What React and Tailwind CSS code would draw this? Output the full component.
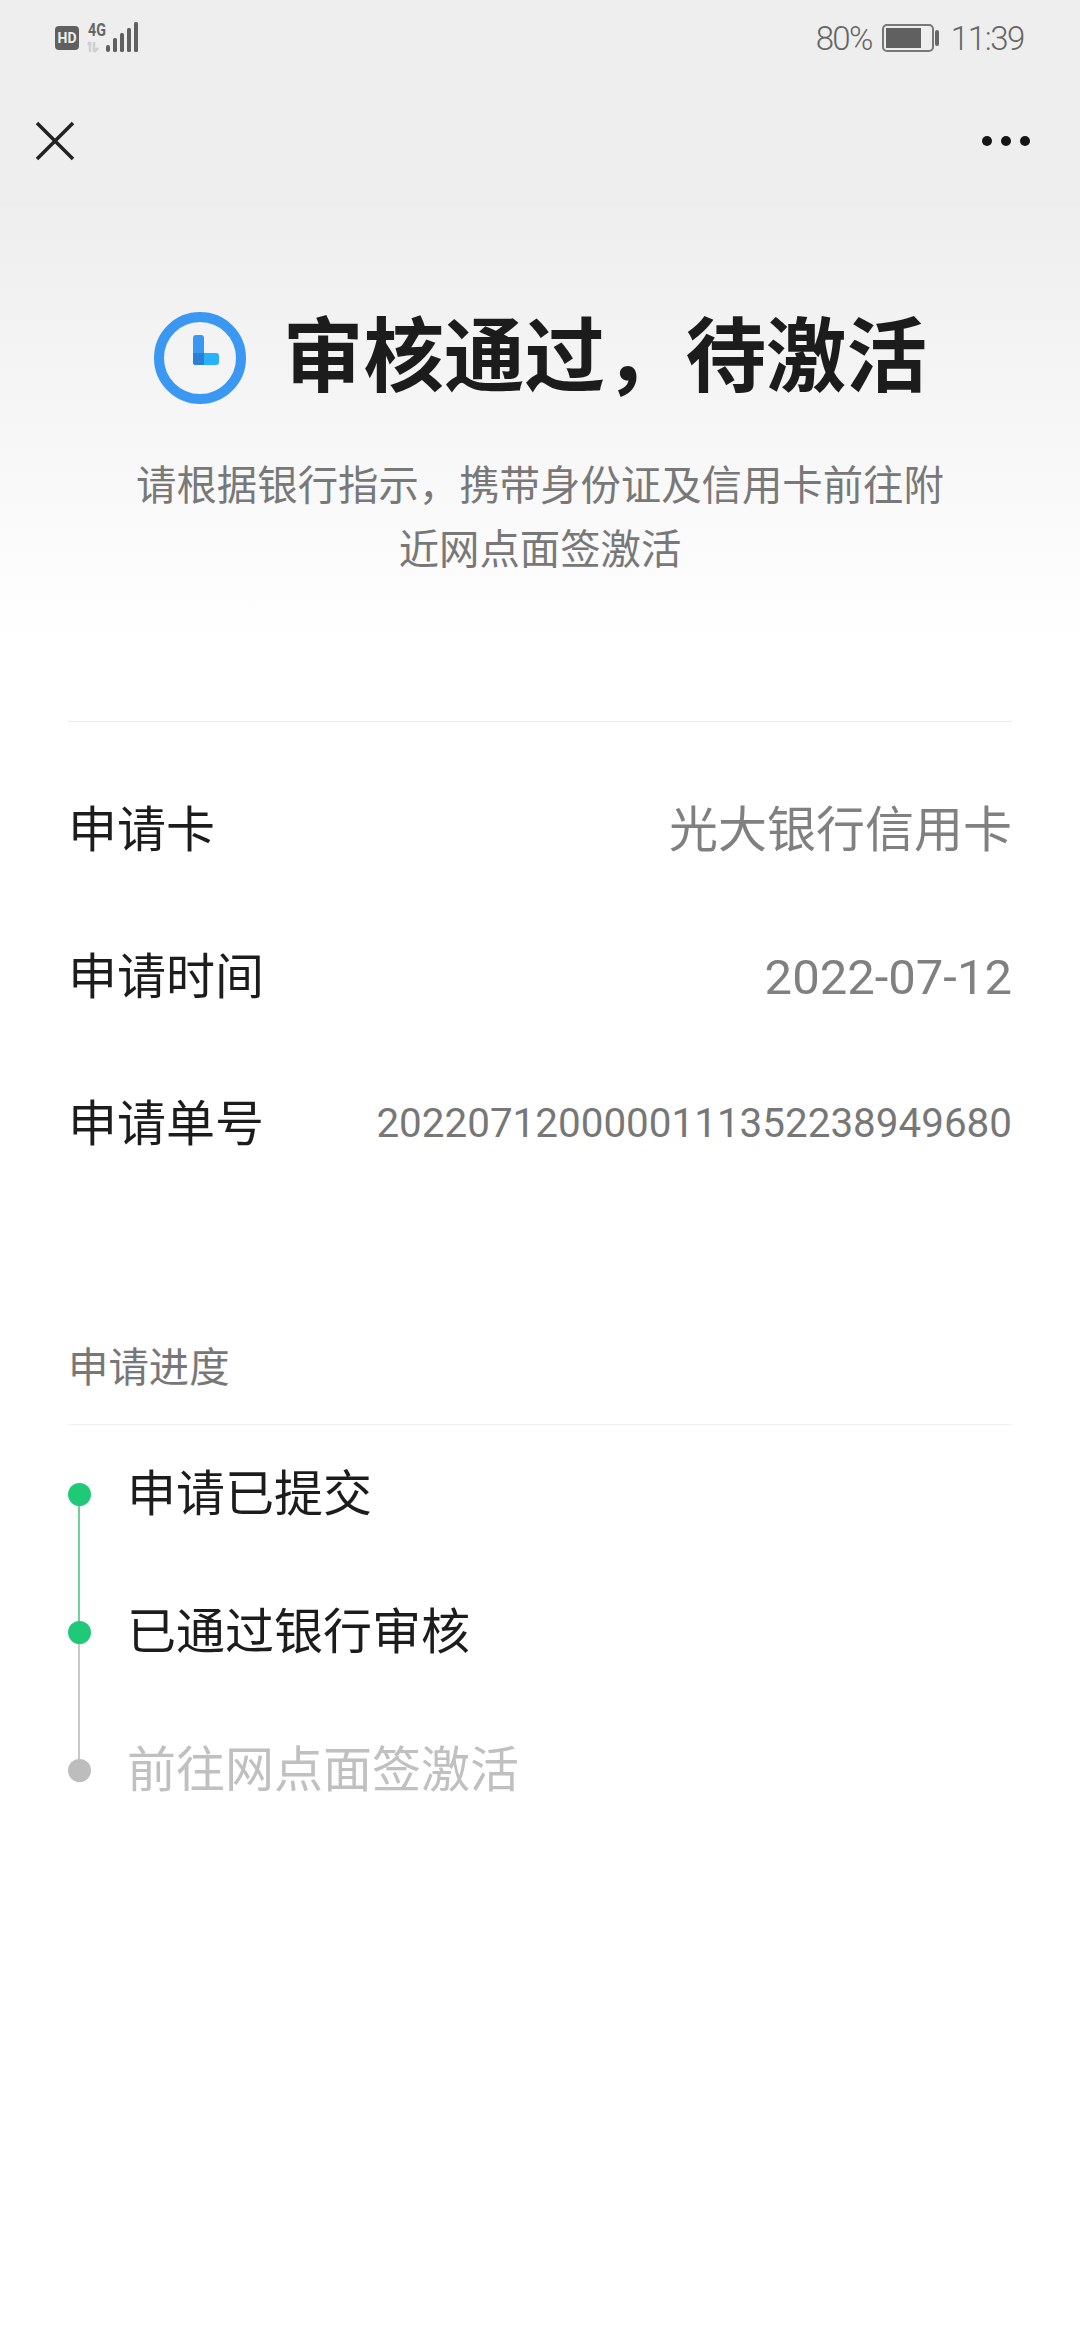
const sans = "font-['Roboto','Noto_Sans_CJK_SC',sans-serif]";

function Clock() {
  return (
    <svg width="92" height="92" viewBox="0 0 92 92" className="shrink-0">
      <circle cx="46" cy="46" r="41" fill="none" stroke="#3a98f3" strokeWidth="10" />
      <rect x="39" y="23" width="11" height="30" rx="3" fill="#3a98f3" />
      <rect x="39" y="41" width="26" height="12" rx="3" fill="#2bb0fb" />
      <path d="M39 41h11v12h-8a3 3 0 0 1-3-3z" fill="#2a7fd8" />
    </svg>
  );
}

function StatusBar() {
  return (
    <div className="flex h-[76px] items-center justify-between pl-[55px] pr-[56px] text-[#666666]">
      <svg width="88" height="44" viewBox="0 -4 88 44">
        <rect x="0" y="6" width="24" height="24" rx="4" fill="#606060" />
        <text x="12" y="23" textAnchor="middle" fontSize="14" fontWeight="700" fill="#efefef" fontFamily="Roboto">HD</text>
        <text transform="translate(33 16) scale(.75 1)" fontSize="19" fontWeight="700" fill="#666" fontFamily="Roboto">4G</text>
        <path d="M35 22v10M39 22v10M39 32l4-4M35 22l-2 3" stroke="#cfcfcf" strokeWidth="2.5" fill="none" />
        <rect x="51" y="25" width="4" height="7" rx="2" fill="#606060" />
        <rect x="58" y="18" width="4" height="14" rx="1.5" fill="#606060" />
        <rect x="65" y="13" width="4" height="19" rx="1.5" fill="#606060" />
        <rect x="72" y="8" width="4" height="24" rx="1.5" fill="#606060" />
        <rect x="79" y="2" width="4" height="30" rx="1.5" fill="#606060" />
      </svg>
      <div className="flex items-center">
        <span className="text-[33px] font-light leading-none tracking-[-1.6px]">80%</span>
        <svg width="58" height="30" viewBox="0 0 58 30" className="ml-[10px]">
          <rect x="1" y="2" width="50" height="26" rx="4" fill="none" stroke="#777" strokeWidth="2" />
          <rect x="4" y="5" width="35" height="20" fill="#606060" />
          <rect x="53" y="7" width="4" height="16" rx="2" fill="#666" />
        </svg>
        <span className="ml-[11px] text-[33px] font-light leading-none tracking-[-1.4px]">11:39</span>
      </div>
    </div>
  );
}

function NavBar() {
  return (
    <div className="flex h-[129px] items-center justify-between border-b border-[#e9e9e9] pl-[35px] pr-[50px]">
      <svg width="40" height="40" viewBox="0 0 40 40" className="mt-[2px]">
        <path d="M2 2 38 38M38 2 2 38" stroke="#222" strokeWidth="3.5" />
      </svg>
      <div className="mt-[2px] flex gap-[9px]">
        <span className="h-[10px] w-[10px] rounded-full bg-[#151515]" />
        <span className="h-[10px] w-[10px] rounded-full bg-[#151515]" />
        <span className="h-[10px] w-[10px] rounded-full bg-[#151515]" />
      </div>
    </div>
  );
}

function InfoRow({ label, value, small }) {
  return (
    <div className="flex h-[147px] items-center justify-between">
      <span className="text-[49px] leading-none text-[#1c1c1c]">{label}</span>
      <span className={small ? "text-[40.4px] leading-none text-[#777777]" : "text-[49px] leading-none text-[#808080]"}>{value}</span>
    </div>
  );
}

function Step({ text, color, textColor, line }) {
  return (
    <div className="relative flex h-[138px] items-center">
      {line && <span className="absolute left-[10px] top-[69px] h-[138px] w-[2px]" style={{ backgroundColor: line }} />}
      <span className="relative h-[23px] w-[23px] shrink-0 rounded-full" style={{ backgroundColor: color }} />
      <span className="ml-[36px] text-[49px] leading-none" style={{ color: textColor }}>{text}</span>
    </div>
  );
}

export default function App() {
  return (
    <div className={`${sans} min-h-[2340px] w-[1080px] bg-white`}>
      <div className="bg-[#eeeeee]">
        <StatusBar />
        <NavBar />
      </div>
      <div className="h-[445px] bg-gradient-to-b from-[#eeeeee] to-white pt-[107px]">
        <div className="flex items-center pl-[154px]">
          <Clock />
          <h1 className="ml-[37px] text-[80.5px] font-bold leading-none text-[#1c1c1c]">审核通过，待激活</h1>
        </div>
        <p className="mx-auto mt-[51px] w-[816px] text-center text-[40.4px] leading-[64px] text-[#787878]">
          请根据银行指示，携带身份证及信用卡前往附近网点面签激活
        </p>
      </div>
      <div className="px-[68px] pt-[71px]">
        <div className="border-t border-[#ececec] pt-[35px]">
          <InfoRow label="申请卡" value="光大银行信用卡" />
          <InfoRow label="申请时间" value="2022-07-12" />
          <InfoRow label="申请单号" value="2022071200000111352238949680" small />
        </div>
        <div className="mt-[147px] border-b border-[#f0f0f0] pb-[31px] text-[40.4px] leading-[48px] text-[#777777]">申请进度</div>
        <div>
          <Step text="申请已提交" color="#1fc977" textColor="#1c1c1c" line="#6ed09f" />
          <Step text="已通过银行审核" color="#1fc977" textColor="#1c1c1c" line="#c8c8c8" />
          <Step text="前往网点面签激活" color="#bdbdbd" textColor="#c0c0c0" />
        </div>
      </div>
    </div>
  );
}
